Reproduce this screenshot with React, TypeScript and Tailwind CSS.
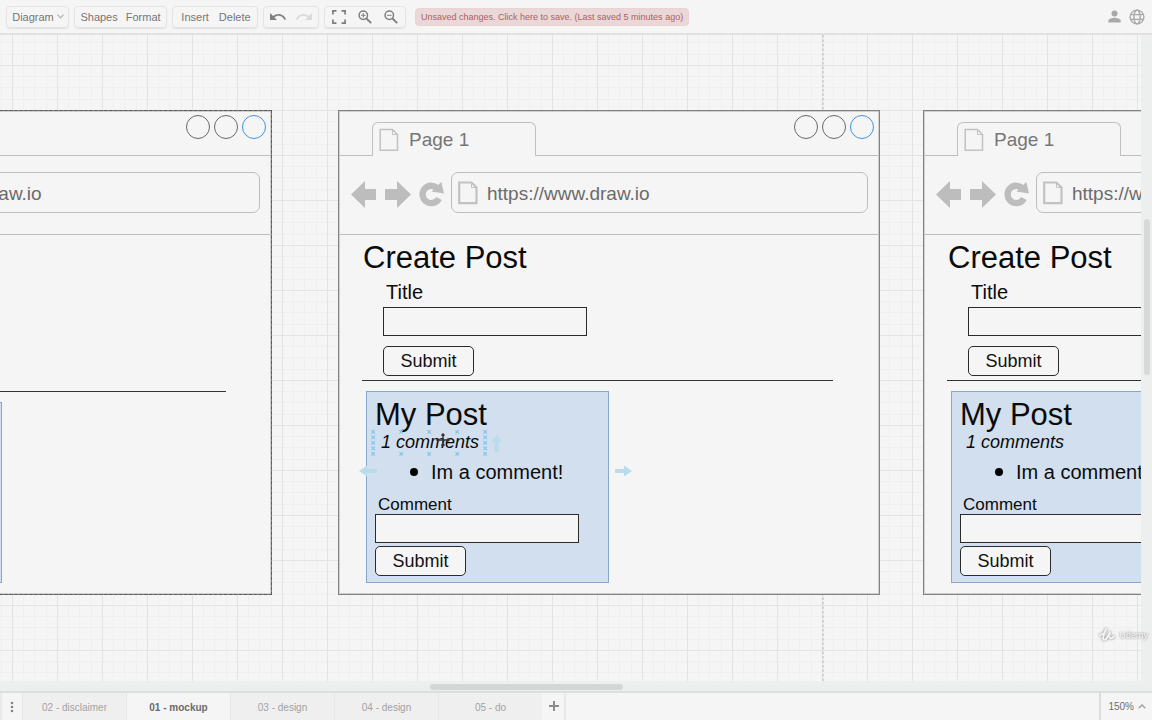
import { useId } from "react";
import type { ReactNode } from "react";

function Group({ children, className = "" }: { children: ReactNode; className?: string }) {
  return (
    <div
      className={`flex h-[22px] items-center rounded border border-[#e4e4e4] shadow-[0_1px_1px_#e2e2e2] ${className}`}
    >
      {children}
    </div>
  );
}

function Header() {
  return (
    <header className="flex h-[35px] shrink-0 items-center gap-[5px] border-b-2 border-[#e1e1e1] pl-1.5 pr-[7px] text-[11px] leading-4 text-[#757575]">
      <Group className="w-[63px] justify-center">
        <button type="button" className="flex items-center gap-[3px] pl-px">
          Diagram
          <svg width="7" height="5" viewBox="0 0 7 5" fill="none" stroke="#b5b5b5" strokeWidth="1.3" aria-hidden="true">
            <path d="M.6 .8 3.5 3.9 6.4 .8" />
          </svg>
        </button>
      </Group>
      <Group className="w-[93px] justify-center gap-2">
        <button type="button">Shapes</button>
        <button type="button">Format</button>
      </Group>
      <Group className="w-[86px] justify-center gap-2.5 pl-0.5">
        <button type="button">Insert</button>
        <button type="button">Delete</button>
      </Group>
      <Group className="w-[56px] justify-center gap-2.5">
        <button type="button" aria-label="Undo">
          <svg width="16" height="8" viewBox="0 0 16 8" aria-hidden="true">
            <path d="M0 0v7h7L4.4 4.4C5.600 3.400 7 2.800 8.600 2.800c2.700 0 4.900 1.700 5.800 4.100l1.600-.6C14.900 3.300 12 1 8.600 1 6.500 1 4.600 1.800 3.100 3.100z" fill="#808080" />
          </svg>
        </button>
        <button type="button" aria-label="Redo">
          <svg width="16" height="8" viewBox="0 0 16 8" aria-hidden="true">
            <path d="M16 0v7H9l2.600-2.600C10.400 3.400 9 2.800 7.400 2.800c-2.700 0-4.900 1.700-5.800 4.100L0 6.300C1.100 3.300 4 1 7.400 1c2.100 0 4 .8 5.500 2.100z" fill="#dadada" />
          </svg>
        </button>
      </Group>
      <Group className="w-[82px] justify-center gap-3">
        <button type="button" aria-label="Fit">
          <svg width="14" height="14" viewBox="0 0 14 14" fill="none" stroke="#7d7d7d" strokeWidth="1.7" aria-hidden="true">
            <path d="M.9 4.500V.9h3.600M9.500 .9h3.600v3.600M13.100 9.500v3.600H9.500M4.500 13.100H.9V9.500" />
          </svg>
        </button>
        <button type="button" aria-label="Zoom in">
          <svg width="14" height="14" viewBox="0 0 14 14" fill="none" stroke="#808080" strokeWidth="1.5" aria-hidden="true">
            <circle cx="5.300" cy="5.300" r="4.200" />
            <path d="m8.500 8.500 4.700 4.700" strokeWidth="1.900" />
            <path d="M3 5.300h4.600M5.300 3v4.600" strokeWidth="1" />
          </svg>
        </button>
        <button type="button" aria-label="Zoom out">
          <svg width="14" height="14" viewBox="0 0 14 14" fill="none" stroke="#808080" strokeWidth="1.5" aria-hidden="true">
            <circle cx="5.300" cy="5.300" r="4.200" />
            <path d="m8.500 8.500 4.700 4.700" strokeWidth="1.900" />
            <path d="M3 5.300h4.600" strokeWidth="1" />
          </svg>
        </button>
      </Group>
      <button
        type="button"
        className="ml-1 flex h-[18px] items-center whitespace-nowrap rounded-sm border border-[#ecd2d4] bg-[#ead7d8] px-[5px] text-[9px] text-[#ab6264]"
      >
        Unsaved changes. Click here to save. (Last saved 5 minutes ago)
      </button>
      <div className="ml-auto flex items-center gap-2">
        <button type="button" aria-label="Account">
          <svg width="13" height="13" viewBox="0 0 13 13" fill="#a9a9a9" aria-hidden="true">
            <circle cx="6.500" cy="3.600" r="3" />
            <path d="M.3 12.500v-1.700c0-2.100 4.100-3.100 6.200-3.100s6.200 1 6.200 3.100v1.700z" />
          </svg>
        </button>
        <button type="button" aria-label="Language">
          <svg width="16" height="16" viewBox="0 0 16 16" fill="none" stroke="#a9a9a9" strokeWidth="1.4" aria-hidden="true">
            <circle cx="8" cy="8" r="6.900" />
            <ellipse cx="8" cy="8" rx="3.100" ry="6.900" />
            <path d="M1.600 5.600h12.800M1.600 10.400h12.800" />
          </svg>
        </button>
      </div>
    </header>
  );
}

function Grid() {
  return (
    <svg className="absolute inset-0 h-full w-full" aria-hidden="true">
      <defs>
        <pattern id="grid" x="12" y="30" width="45" height="45" patternUnits="userSpaceOnUse">
          <path d="M11.500 0v45M22.500 0v45M34.500 0v45M0 11.500h45M0 22.500h45M0 34.500h45" stroke="#efefef" fill="none" />
          <path d="M.5 0v45M0 .5h45" stroke="#e3e3e3" fill="none" />
        </pattern>
      </defs>
      <rect width="100%" height="100%" fill="url(#grid)" />
      <path d="M823 0v1000" stroke="#c4c4c4" strokeWidth="1.300" strokeDasharray="2.500 2" />
    </svg>
  );
}

function FileIcon({ stroke }: { stroke: number }) {
  return (
    <svg width="20" height="24" viewBox="0 0 20 24" fill="none" stroke="#c2c2c2" strokeWidth={stroke} aria-hidden="true">
      <path d="M1.200 1.500h12.300l5 5v15.700H1.200z" />
      <path d="M13.500 2v4.500h5" strokeWidth="1" />
    </svg>
  );
}

function BrowserWindow({ children, className }: { children: ReactNode; className: string }) {
  return (
    <section
      className={`absolute top-[75px] h-[485px] w-[542px] border border-[#828282] bg-[#f5f5f5] p-px shadow-[inset_0_0_0_1px_#cfcfcf] ${className}`}
    >
      <div className="flex h-11 items-end text-[19px] text-[#757575]">
        <div className="w-8 border-b border-[#bdbdbd]" />
        <div className="flex h-[34px] w-[164px] items-center gap-2.5 rounded-t-md border border-b-0 border-[#c0c0c0] pl-1.5">
          <FileIcon stroke={1.5} />
          <span className="pt-0.5">Page 1</span>
        </div>
        <div className="flex h-11 flex-1 items-start justify-end gap-1 border-b border-[#bdbdbd] pr-1 pt-[3px]">
          <span className="h-6 w-6 rounded-full border border-[#686868]" />
          <span className="h-6 w-6 rounded-full border border-[#686868]" />
          <span className="h-6 w-6 rounded-full border border-[#3f93e4]" />
        </div>
      </div>
      <div className="flex h-[79px] items-center border-b border-[#bdbdbd] pb-[5px] pl-[11px] pr-2.5">
        <svg width="94" height="30" viewBox="0 0 94 30" fill="#bdbdbd" aria-hidden="true">
          <path d="M0 16.500 14 3v8h11v11H14v8z" />
          <path d="M60 16.500 46 3v8H34v11h12v8z" />
          <path d="M87.300 11.300A8.700 8.700 0 1 0 88 20.500" fill="none" stroke="#bdbdbd" strokeWidth="6.300" />
          <path d="M90.300 4 93 15.500 80.500 13.500z" />
        </svg>
        <div className="ml-1.5 flex h-[41px] flex-1 items-center gap-[9px] rounded-[7px] border border-[#bdbdbd] pl-1.5 text-[19px] text-[#6b6b6b]">
          <FileIcon stroke={2.2} />
          <span className="pt-1">https://www.draw.io</span>
        </div>
      </div>
      {children}
    </section>
  );
}

const fieldClass = "block h-[29px] w-[204px] border border-[#2b2b2b] bg-[#f5f5f5] px-1 text-lg";
const submitClass =
  "block h-[30px] w-[91px] rounded-[5px] border border-[#2b2b2b] bg-[#f5f5f5] text-lg leading-6 text-[#111111]";

function PostPage() {
  const id = useId();
  return (
    <div className="pl-[22px] pt-1.5 text-[#0b0b0b]">
      <h2 className="pl-px text-[31px] leading-[34px]">Create Post</h2>
      <form className="ml-[21px] mt-[5px]" onSubmit={(e) => e.preventDefault()}>
        <label htmlFor={`${id}-title`} className="block pl-[3px] text-xl leading-6">
          Title
        </label>
        <input id={`${id}-title`} className={`mt-[3px] ${fieldClass}`} />
        <button className={`mt-2.5 ${submitClass}`}>Submit</button>
      </form>
      <hr className="mt-1 w-[471px] border-[#333333]" />
      <article className="ml-1 mt-2.5 w-[243px] border border-[#84a7cb] bg-[#d2dfee] px-2 pb-1.5 pt-1.5">
        <h2 className="text-[31px] leading-[34px]">My Post</h2>
        <p className="pl-1.5 text-lg italic leading-5">1 comments</p>
        <ul className="mt-2 pl-[35px] text-xl leading-6">
          <li className="flex items-center gap-[13px]">
            <span className="h-2 w-2 rounded-full bg-black" />
            Im a comment!
          </li>
        </ul>
        <form className="mt-3" onSubmit={(e) => e.preventDefault()}>
          <label htmlFor={`${id}-comment`} className="block pl-[3px] text-[17px] leading-[18px]">
            Comment
          </label>
          <input id={`${id}-comment`} className={fieldClass} />
          <button className={`mt-[3px] ${submitClass}`}>Submit</button>
        </form>
      </article>
    </div>
  );
}

const handles = [
  [0, 0], [28, 0], [56, 0], [84, 0], [112, 0],
  [0, 22], [28, 22], [56, 22], [84, 22], [112, 22],
  [0, 5.5], [0, 11], [0, 16.5], [112, 5.5], [112, 11], [112, 16.5],
];

function Selection() {
  return (
    <svg className="absolute left-[358px] top-[390px]" width="276" height="56" viewBox="0 0 276 56" fill="none" aria-hidden="true">
      <g stroke="#7cc4ea" strokeWidth="1.100">
        {handles.map(([x, y]) => (
          <path key={`${x}-${y}`} d={`M${x + 13.500} ${y + 5.200}l3.400 3.400m0-3.400l-3.400 3.400`} />
        ))}
      </g>
      <g fill="#b9dcec">
        <path d="M138.500 10l5.500 7h-3.500v10h-4V17H133z" />
        <path d="M1 46l8-5.500v3.500h10v4H9v3.500z" />
        <path d="M274 46l-8-5.500v3.500h-9v4h9v3.500z" />
      </g>
      <path
        d="M85 9v12M79 15h12M83.500 10.500 85 9l1.500 1.500M83.500 19.500 85 21l1.500-1.500M80.500 13.500 79 15l1.500 1.500M89.500 13.500 91 15l-1.500 1.500"
        stroke="#333333"
        strokeWidth="1.500"
      />
    </svg>
  );
}

function Watermark() {
  return (
    <div className="pointer-events-none absolute bottom-[39px] right-1 flex items-center gap-[3px] text-[9px] leading-3 text-[#f4f4f4] [filter:drop-shadow(0_0_1px_#777777)]">
      <svg width="17" height="14" viewBox="0 0 17 14" fill="none" stroke="#f4f4f4" strokeWidth="2" strokeLinecap="round" strokeLinejoin="round" aria-hidden="true">
        <path d="M1 7.500 4 5.500M7 1C5.500 4.500 3.800 8 4.200 10.800c.6 3.200 5-1.200 6.800-6.600-.7 3-1.300 5.600.3 6 1.300.3 2.700-.7 3.700-1.600" />
      </svg>
      Udemy
    </div>
  );
}

function Footer() {
  const pages = ["02 - disclaimer", "01 - mockup", "03 - design", "04 - design", "05 - do"];
  return (
    <footer className="flex h-[29px] shrink-0 border-t-2 border-[#dddfde] text-[10px] text-[#a3a3a3]">
      <button type="button" aria-label="Pages" className="flex w-[22px] items-center justify-center border-l-2 border-[#eaeaea]">
        <svg width="4" height="12" viewBox="0 0 4 12" fill="#858585" aria-hidden="true">
          <circle cx="2" cy="2" r="1.300" />
          <circle cx="2" cy="6" r="1.300" />
          <circle cx="2" cy="10" r="1.300" />
        </svg>
      </button>
      {pages.map((page) => (
        <button
          type="button"
          key={page}
          className={
            page === "01 - mockup"
              ? "w-[104px] border-l border-[#e6e6e6] pt-0.5 font-bold text-[#6a6a6a]"
              : "w-[104px] border-l border-[#e6e6e6] bg-[#efefef] pt-0.5"
          }
        >
          {page}
        </button>
      ))}
      <button type="button" aria-label="Insert page" className="flex w-6 justify-center border-r-2 border-[#e8e8e8] pl-0.5 pt-2">
        <svg width="10" height="10" viewBox="0 0 10 10" stroke="#8c8c8c" strokeWidth="2" aria-hidden="true">
          <path d="M5 0v10M0 5h10" />
        </svg>
      </button>
      <button
        type="button"
        className="ml-auto flex w-[53px] items-center justify-end gap-1 border-l-2 border-[#dcdcdc] pr-1.5 text-[#6f6f6f]"
      >
        150%
        <svg width="8" height="5" viewBox="0 0 8 5" fill="none" stroke="#a0a0a0" strokeWidth="1.400" aria-hidden="true">
          <path d="M.7 4.300 4 1l3.300 3.300" />
        </svg>
      </button>
    </footer>
  );
}

export default function App() {
  return (
    <div className="flex h-screen flex-col overflow-hidden bg-[#f5f5f5] font-['Liberation_Sans',Arial,sans-serif]">
      <Header />
      <div className="relative flex min-h-0 flex-1">
        <main className="relative min-w-0 flex-1 overflow-hidden">
          <Grid />
          <BrowserWindow className="left-[-270px] outline-1 -outline-offset-1 outline-dashed outline-[#5c5c5c]">
            <div className="pl-[22px] pt-[156px]">
              <hr className="w-[472px] border-[#333333]" />
              <div className="ml-1 mt-2.5 h-[181px] w-[244px] border border-[#84a7cb] bg-[#d2dfee]" />
            </div>
          </BrowserWindow>
          <BrowserWindow className="left-[338px]">
            <PostPage />
          </BrowserWindow>
          <BrowserWindow className="left-[923px]">
            <PostPage />
          </BrowserWindow>
          <Selection />
        </main>
        <div className="w-[11px] shrink-0 bg-[#edefee] pl-[3px] pt-[184px]">
          <div className="h-[156px] w-1.5 rounded-full bg-[#d8dad9]" />
        </div>
        <Watermark />
      </div>
      <div className="h-2.5 shrink-0 bg-[#edefee] pl-[430px] pt-[3px]">
        <div className="h-1.5 w-[193px] rounded-full bg-[#d5d7d6]" />
      </div>
      <Footer />
    </div>
  );
}
